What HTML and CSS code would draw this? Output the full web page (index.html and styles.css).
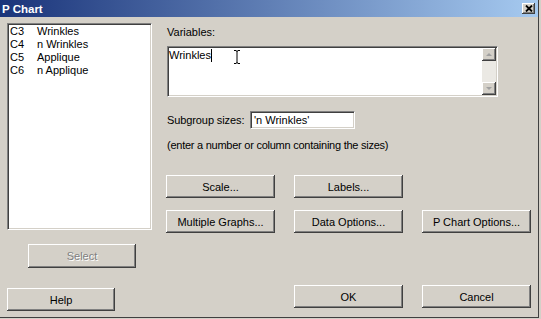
FILE: index.html
```html
<!DOCTYPE html>
<html lang="en">
<head>
    <meta charset="UTF-8">
    <title>P Chart</title>
    <link rel="stylesheet" href="styles.css">
</head>
<body>
    <div class="window">
        <div class="titlebar">
            <span class="title">P Chart</span>
            <button class="close-btn" aria-label="Close">
                <svg width="8" height="7" viewBox="0 0 8 7"><path d="M1 0.5 L7 6.5 M7 0.5 L1 6.5" stroke="#000" stroke-width="1.8" fill="none"/></svg>
            </button>
        </div>

        <div class="dialog">
            <div class="left-col">
                <div class="listbox">
                    <div class="list-row"><span class="col-id">C3</span><span>Wrinkles</span></div>
                    <div class="list-row"><span class="col-id">C4</span><span>n Wrinkles</span></div>
                    <div class="list-row"><span class="col-id">C5</span><span>Applique</span></div>
                    <div class="list-row"><span class="col-id">C6</span><span>n Applique</span></div>
                </div>
                <button class="btn btn-select" disabled>Select</button>
                <button class="btn btn-help">Help</button>
            </div>

            <div class="right-col">
                <div class="field-label">Variables:</div>
                <div class="varbox">
                    <div class="varbox-text">Wrinkles<span class="caret"></span></div>
                    <div class="scrollbar">
                        <div class="scroll-btn"><span class="arrow-up"></span></div>
                        <div class="scroll-track"></div>
                        <div class="scroll-btn"><span class="arrow-down"></span></div>
                    </div>
                    <!-- mouse cursor over the text box -->
                    <svg class="ibeam" width="8" height="14" viewBox="0 0 8 14">
                        <path d="M1 0.5 H3 M5 0.5 H7 M4 1 V13 M1 13.5 H3 M5 13.5 H7 M3 1 H5 M3 13 H5" stroke="#000" stroke-width="1" fill="none"/>
                    </svg>
                </div>

                <div class="subgroup-row">
                    <span class="subgroup-label">Subgroup sizes:</span>
                    <div class="subgroup-input">'n Wrinkles'</div>
                </div>
                <div class="hint">(enter a number or column containing the sizes)</div>

                <div class="option-grid">
                    <button class="btn">Scale...</button>
                    <button class="btn">Labels...</button>
                    <span></span>
                    <button class="btn">Multiple Graphs...</button>
                    <button class="btn">Data Options...</button>
                    <button class="btn">P Chart Options...</button>
                </div>

                <div class="action-row">
                    <button class="btn btn-ok">OK</button>
                    <button class="btn">Cancel</button>
                </div>
            </div>
        </div>
    </div>
</body>
</html>
```

FILE: styles.css
```css
html,
body {
    margin: 0;
    background-color: #d4d0c8;
}

body {
    font-family: "Liberation Sans", Arial, sans-serif;
    font-size: 11px;
    color: #000;
    overflow: hidden;
}

.window {
    width: 538px;
    height: 317px;
    border-right: 1px solid #404040;
    border-bottom: 1px solid #404040;
    background-color: #d4d0c8;
}

.titlebar {
    height: 17px;
    display: flex;
    align-items: center;
    justify-content: space-between;
    padding: 0 3px 0 2px;
    background: linear-gradient(to right, #1a347a, #a6caf0);
}

.title {
    color: #fff;
    font-weight: bold;
    font-size: 11.5px;
}

.close-btn {
    width: 13px;
    height: 11px;
    padding: 0;
    border: none;
    display: flex;
    align-items: center;
    justify-content: center;
    background-color: #d4d0c8;
    box-shadow: inset -1px -1px #404040, inset 1px 1px #fff, inset -2px -2px #808080;
}

.dialog {
    display: flex;
    gap: 14px;
    padding: 6px 0 0 7px;
}

/* left side: column list */
.left-col {
    width: 145px;
    display: flex;
    flex-direction: column;
    align-items: flex-start;
}

.listbox {
    width: 145px;
    height: 207px;
    box-sizing: border-box;
    padding: 1px 0 0 2px;
    background-color: #fff;
    border: 1px solid;
    border-color: #808080 #fff #fff #808080;
    box-shadow: inset 1px 1px #404040, inset -1px -1px #d4d0c8;
}

.list-row {
    display: flex;
    height: 13px;
    line-height: 13px;
}

.col-id {
    width: 27px;
}

.btn {
    height: 23px;
    width: 109px;
    padding: 0;
    border: none;
    font-family: inherit;
    font-size: 11px;
    color: #000;
    background-color: #d4d0c8;
    box-shadow: inset -1px -1px #404040, inset 1px 1px #fff, inset -2px -2px #808080, inset 2px 2px #d4d0c8;
}

.btn-select {
    width: 108px;
    height: 24px;
    margin: 14px 0 0 21px;
    color: #808080;
    text-shadow: 1px 1px #fff;
}

.btn-help {
    width: 108px;
    margin-top: 20px;
}

/* right side */
.right-col {
    display: flex;
    flex-direction: column;
    align-items: flex-start;
}

.field-label {
    margin: 3px 0 0 1px;
    line-height: 13px;
}

.varbox {
    position: relative;
    width: 331px;
    height: 51px;
    margin: 7px 0 0 1px;
    box-sizing: border-box;
    display: flex;
    background-color: #fff;
    border: 1px solid;
    border-color: #808080 #fff #fff #808080;
    box-shadow: inset 1px 1px #404040, inset -1px -1px #d4d0c8;
}

.varbox-text {
    flex: 1;
    padding: 2px 0 0 1px;
    line-height: 13px;
}

.caret {
    display: inline-block;
    width: 1px;
    height: 13px;
    vertical-align: top;
    background-color: #000;
}

.scrollbar {
    width: 14px;
    margin: 1px 1px 1px 0;
    display: flex;
    flex-direction: column;
    background-color: #ebe9e4;
}

.scroll-btn {
    height: 13px;
    display: flex;
    align-items: center;
    justify-content: center;
    background-color: #d4d0c8;
    box-shadow: inset -1px -1px #404040, inset 1px 1px #fff, inset -2px -2px #808080;
}

.scroll-track {
    flex: 1;
}

.arrow-up,
.arrow-down {
    width: 0;
    height: 0;
    border-left: 3px solid transparent;
    border-right: 3px solid transparent;
}

.arrow-up {
    border-bottom: 3px solid #a0a0a0;
}

.arrow-down {
    border-top: 3px solid #a0a0a0;
}

.ibeam {
    position: absolute;
    left: 65px;
    top: 3px;
}

.subgroup-row {
    display: flex;
    align-items: center;
    margin: 14px 0 0 1px;
}

.subgroup-label {
    width: 83px;
    letter-spacing: -0.1px;
}

.subgroup-input {
    width: 105px;
    height: 18px;
    box-sizing: border-box;
    padding: 1px 0 0 3px;
    line-height: 14px;
    background-color: #fff;
    border: 1px solid;
    border-color: #808080 #fff #fff #808080;
    box-shadow: inset 1px 1px #404040, inset -1px -1px #d4d0c8;
}

.hint {
    margin: 10px 0 0 1px;
    line-height: 13px;
    letter-spacing: -0.25px;
}

.option-grid,
.action-row {
    display: grid;
    grid-template-columns: repeat(3, 109px);
    column-gap: 19px;
    row-gap: 12px;
}

.option-grid {
    margin-top: 23px;
}

.action-row {
    margin-top: 52px;
}

.btn-ok {
    grid-column: 2;
}
```
